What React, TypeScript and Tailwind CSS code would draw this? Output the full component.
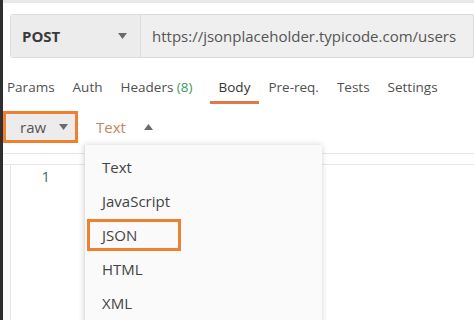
const Caret = ({ up = false }: { up?: boolean }) => (
  <svg width="9" height="6" viewBox="0 0 9 6" className="shrink-0">
    {up ? <path d="M0 6 L4.5 0 L9 6 Z" fill="#6b6b6b" /> : <path d="M0 0 L9 0 L4.5 6 Z" fill="#6b6b6b" />}
  </svg>
);

const tabs = ['Params', 'Auth', 'Headers', 'Body', 'Pre-req.', 'Tests', 'Settings'];

export default function App() {
  return (
    <div
      className="w-[474px] h-[320px] flex bg-white overflow-hidden text-[#505050]"
      style={{ fontFamily: '"Open Sans", "Noto Sans", sans-serif' }}
    >
      <div className="w-[3px] h-full bg-[#2f2f2f] shrink-0" />
      <div className="flex-1 flex flex-col relative">
        <div className="h-[3px] bg-[#e8e8e8]" />

        {/* Request bar */}
        <div className="mt-[11px] ml-[7px] h-[44px] flex border border-[#dcdcdc] rounded-l-[3px]">
          <div className="w-[129px] bg-[#ececec] flex items-center justify-between pl-[11px] pr-[13px]">
            <span className="text-[15px] font-bold text-[#3a3a3a]">POST</span>
            <Caret />
          </div>
          <div className="flex-1 bg-[#efefef] border-l border-[#dcdcdc] flex items-center pl-[11px]">
            <span className="text-[15px] text-[#555] whitespace-nowrap">https://jsonplaceholder.typicode.com/users</span>
          </div>
        </div>

        {/* Tabs */}
        <div className="h-[46px] flex items-end pl-[4px] gap-[18px]">
          {tabs.map((t) => (
            <div
              key={t}
              className={`h-[30px] flex items-center border-b-[3px] ${
                t === 'Body' ? 'border-[#e0794a] text-[#333] px-[9px] -ml-[1px] -mr-[9px]' : 'border-transparent'
              }`}
            >
              <span className="text-[13.5px] whitespace-nowrap">
                {t}
                {t === 'Headers' && <span className="text-[#3d9a5f]"> (8)</span>}
              </span>
            </div>
          ))}
        </div>

        {/* Body type row */}
        <div className="mt-[7px] h-[32px] flex items-center">
          <div className="w-[75px] h-[32px] border-[3px] border-[#f0802f] bg-[#ececec] flex items-center justify-between pl-[14px] pr-[7px]">
            <span className="text-[15px] text-[#555]">raw</span>
            <Caret />
          </div>
          <div className="ml-[18px] flex items-center gap-[18px]">
            <span className="text-[15px] text-[#c7865c]">Text</span>
            <Caret up />
          </div>
        </div>

        <div className="mt-[10px] h-[12px] border-t border-b border-[#e6e6e6]" />

        {/* Editor */}
        <div className="ml-[7px] flex-1 border-l border-[#e6e6e6] flex">
          <div className="w-[60px] text-right pr-[21px] text-[15px] text-[#4d6b6b]">1</div>
        </div>

        {/* Dropdown */}
        <div className="absolute left-[81px] top-[145px] w-[238px] h-[190px] bg-[#fafafa] border-l border-[#e2e2e2] shadow-[0_0_6px_rgba(0,0,0,0.18)] flex flex-col pt-[5px]">
          {['Text', 'JavaScript', 'JSON', 'HTML', 'XML'].map((item) => (
            <div key={item} className="h-[34px] flex items-center">
              {item === 'JSON' ? (
                <div className="ml-[2px] w-[94px] h-[32px] border-[3px] border-[#f0802f] flex items-center pl-[12px]">
                  <span className="text-[15px] text-[#444]">{item}</span>
                </div>
              ) : (
                <span className="ml-[17px] text-[15px] text-[#444]">{item}</span>
              )}
            </div>
          ))}
        </div>
      </div>
    </div>
  );
}
